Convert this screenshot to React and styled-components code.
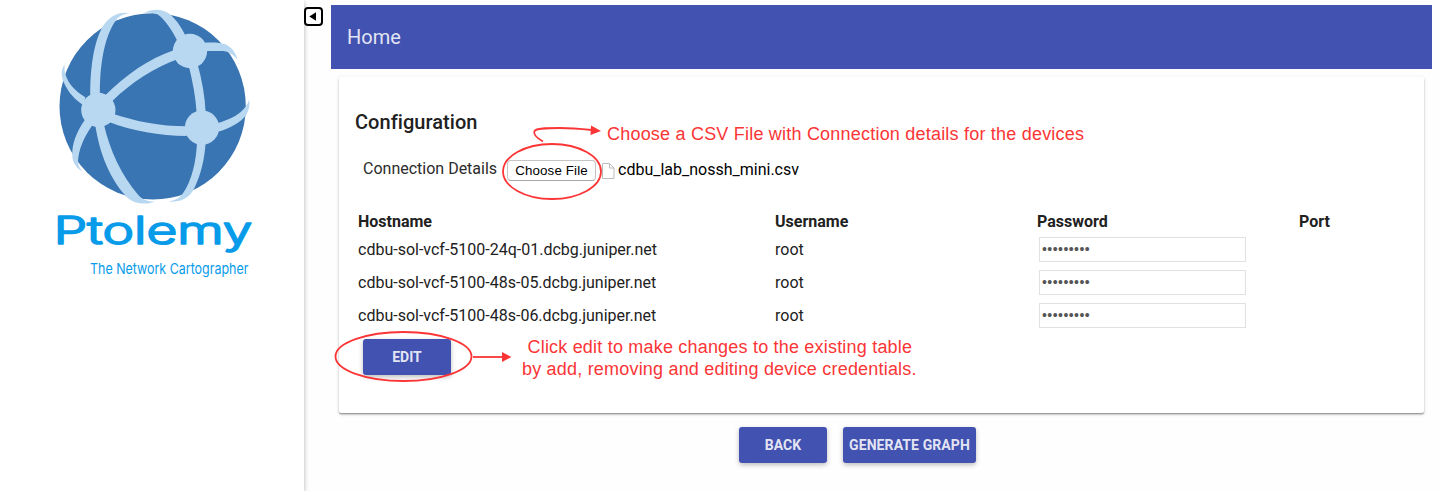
import React from "react";
import styled, { createGlobalStyle } from "styled-components";

const GlobalStyle = createGlobalStyle`
  *, *::before, *::after { box-sizing: border-box; }
  body {
    margin: 0;
    background: #fefefe;
    color: #212121;
    font-family: Roboto, "Liberation Sans", sans-serif;
    overflow: hidden;
  }
`;

const Page = styled.div`
  position: relative;
  display: flex;
  width: 1440px;
  height: 491px;
`;

const Sidebar = styled.aside`
  flex: none;
  width: 304px;
  padding-left: 40px;
  background: #fff;
  box-shadow: 0 2px 5px rgba(0, 0, 0, 0.3);
`;

const LogoDrawing = styled.svg`
  display: block;
  overflow: visible;
`;

const ToggleColumn = styled.div`
  flex: none;
  width: 27px;
  padding-top: 7px;
`;

const CollapseButton = styled.button`
  display: flex;
  align-items: center;
  justify-content: center;
  width: 19px;
  height: 19px;
  padding: 0;
  border: 2px solid #000;
  border-radius: 4px;
  background: #fff;
`;

const Main = styled.main`
  width: 1101px;
  padding-top: 5px;
`;

const Header = styled.header`
  display: flex;
  align-items: center;
  height: 64px;
  padding-left: 16px;
  background: #4252b1;
  color: rgba(255, 255, 255, 0.87);
  font-size: 20px;
`;

const Card = styled.section`
  height: 336px;
  margin: 8px 8px 0;
  padding: 33px 16px 0;
  border-radius: 2px;
  background: #fff;
  box-shadow: 0 2px 2px 0 rgba(0, 0, 0, 0.14), 0 1px 1px 0 rgba(0, 0, 0, 0.26),
    0 1px 4px 0 rgba(0, 0, 0, 0.12);
`;

const Title = styled.h2`
  margin: 0;
  font-size: 20px;
  font-weight: 500;
  line-height: 24px;
  letter-spacing: 0.05px;
`;

const FileRow = styled.div`
  display: flex;
  align-items: center;
  height: 22px;
  margin-top: 26px;
  padding-left: 8px;
  color: #000;
`;

const FieldLabel = styled.label`
  width: 144px;
  margin-top: -5px;
  color: #2b2b2b;
  font-size: 16px;
  white-space: nowrap;
`;

const FileButton = styled.button`
  width: 89px;
  height: 21px;
  margin: -1px 6px 0 0;
  padding: 0 0 1px;
  border: 1px solid #c4c4c4;
  border-bottom-color: #a6a6a6;
  border-radius: 4px;
  background: #fff;
  color: #000;
  font: 13.33px "Liberation Sans", Arial, sans-serif;
  letter-spacing: 0.14px;
  white-space: nowrap;
`;

const FileName = styled.span`
  margin: -3px 0 0 3px;
  font-size: 16px;
`;

const DeviceGrid = styled.div`
  display: grid;
  grid-template-columns: 417px 262px 262px 1fr;
  grid-template-rows: 22px repeat(3, 33px);
  align-items: center;
  margin-top: 29px;
  padding-left: 3px;
  font-size: 16px;
`;

const HeadCell = styled.div`
  padding-bottom: 2px;
  font-weight: 700;
`;

const Cell = styled.div`
  white-space: nowrap;
`;

const PasswordInput = styled.input`
  display: block;
  width: 207px;
  height: 25px;
  margin-left: 2px;
  padding: 0 2px 2px;
  border: 1px solid #e1e1e1;
  background: #fff;
  color: #555;
  font: 14px "Liberation Sans", Arial, sans-serif;
  letter-spacing: 0.45px;
`;

const RaisedButton = styled.button`
  display: inline-flex;
  align-items: center;
  justify-content: center;
  width: ${(p) => p.$width || 88}px;
  height: 36px;
  padding: 0;
  border: 0;
  border-radius: 3px;
  background: #4252b1;
  color: rgba(255, 255, 255, 0.87);
  font: 700 14px Roboto, sans-serif;
  letter-spacing: ${(p) => p.$tracking || 0}px;
  text-transform: uppercase;
  white-space: nowrap;
  box-shadow: 0 2px 5px 0 rgba(0, 0, 0, 0.26);
`;

const CardActions = styled.div`
  padding: 7px 0 0 8px;
`;

const PageActions = styled.div`
  display: flex;
  justify-content: center;
  gap: 16px;
  margin-top: 14px;
  padding-right: 48px;
`;

const Markup = styled.svg`
  position: absolute;
  top: 0;
  left: 0;
  pointer-events: none;
`;

const devices = [
  { host: "cdbu-sol-vcf-5100-24q-01.dcbg.juniper.net", user: "root" },
  { host: "cdbu-sol-vcf-5100-48s-05.dcbg.juniper.net", user: "root" },
  { host: "cdbu-sol-vcf-5100-48s-06.dcbg.juniper.net", user: "root" },
];

function Logo() {
  return (
    <LogoDrawing width="230" height="290" viewBox="0 0 690 870">
      <circle cx="338" cy="319" r="279.500" fill="#3975b2" />
      <g fill="#b8d7f1">
        <path d="M151 292 C150 210 160 128 189 78 C210 46 240 33 270 40 C250 42 238 48 229 59 C195 105 178 190 180 292Z" />
        <path d="M312 39 C340 23 372 28 390 43 C407 58 423 79 437 108 L412 122 C394 88 374 57 352 43 C340 38 328 37 312 39Z" />
        <path d="M490 128 C515 127 540 126 556 133 C575 142 588 158 592 179 C578 160 562 153 544 153 L492 153Z" />
        <path d="M196 286 C256 225 326 176 405 149 L412 178 C342 204 276 245 214 306Z" />
        <path d="M472 190 C486 240 495 290 497 340 L470 340 C467 292 458 245 446 196Z" />
        <path d="M212 339 C285 364 360 379 440 379 L440 408 C358 407 278 393 207 366Z" />
        <path d="M530 370 C563 361 592 347 609 329 C619 318 624 310 627 299 C634 330 615 358 584 374 C568 383 550 391 530 396Z" />
        <path d="M497 425 C494 475 484 520 463 565 C448 594 423 609 384 604 C409 602 420 593 429 580 C456 541 469 482 471 425Z" />
        <path d="M191 370 C209 452 246 528 293 583 C305 598 320 605 345 605 C314 615 285 612 263 594 C212 542 178 462 165 370Z" />
        <path d="M157 376 C132 411 115 450 114 485 C115 497 119 504 127 514 C105 503 94 480 97 454 C99 421 116 383 139 354Z" />
        <path d="M136 292 C108 275 84 251 76 222 C73 211 73 205 74 193 C62 210 62 231 74 253 C86 278 105 300 130 315Z" />
        <circle cx="450" cy="153" r="51.500" />
        <circle cx="175" cy="330" r="51.500" />
        <circle cx="486" cy="383" r="51.500" />
      </g>
      <g fill="#079be9" fontFamily="Inter, sans-serif">
        <text
          x="41" y="731" fontSize="113" fontWeight="300" textLength="596"
          lengthAdjust="spacingAndGlyphs" stroke="#079be9" strokeWidth="5"
          strokeLinejoin="round"
        >
          Ptolemy
        </text>
        <text
          x="150" y="822" fontSize="45" textLength="475"
          lengthAdjust="spacingAndGlyphs"
        >
          The Network Cartographer
        </text>
      </g>
    </LogoDrawing>
  );
}

function FileIcon() {
  return (
    <svg width="13" height="17" viewBox="0 0 13 17">
      <path d="M.5 .5H7.500L12 5V15.500H.5Z" fill="#fff" stroke="#bcbcbc" />
      <path d="M7.500 .5V5H12" fill="none" stroke="#bcbcbc" />
    </svg>
  );
}

function Annotations() {
  return (
    <Markup width="1440" height="491" viewBox="0 0 1440 491">
      <g fill="none" stroke="#fb3536" strokeWidth="1.8">
        <ellipse cx="552" cy="171.500" rx="49" ry="27.500" />
        <path d="M543 141.500C537 138 533 134 534.500 131C536 128 546 128 560 128C572 128 582 129 592 130" />
        <ellipse cx="403.500" cy="356.500" rx="68" ry="24.500" />
        <path d="M473 357H503" />
      </g>
      <g fill="#fb3536">
        <path d="M591 125.500 601 131 590.500 135Z" />
        <path d="M502 352 511.500 357 502 362Z" />
      </g>
      <g fill="#fb3536" fontFamily='"Liberation Sans", Arial, sans-serif' fontSize="18">
        <text x="607" y="140" textLength="477">
          Choose a CSV File with Connection details for the devices
        </text>
        <text x="527.500" y="353" textLength="384.500">
          Click edit to make changes to the existing table
        </text>
        <text x="522" y="375" textLength="394.500">
          by add, removing and editing device credentials.
        </text>
      </g>
    </Markup>
  );
}

export default function App() {
  return (
    <>
      <GlobalStyle />
      <Page>
        <Sidebar>
          <Logo />
        </Sidebar>
        <ToggleColumn>
          <CollapseButton aria-label="Collapse sidebar">
            <svg width="15" height="15" viewBox="0 0 15 15">
              <path d="M3.300 7.500 10 3.300V11.700Z" />
            </svg>
          </CollapseButton>
        </ToggleColumn>
        <Main>
          <Header>Home</Header>
          <Card>
            <Title>Configuration</Title>
            <FileRow>
              <FieldLabel>Connection Details</FieldLabel>
              <FileButton>Choose File</FileButton>
              <FileIcon />
              <FileName>cdbu_lab_nossh_mini.csv</FileName>
            </FileRow>
            <DeviceGrid>
              <HeadCell>Hostname</HeadCell>
              <HeadCell>Username</HeadCell>
              <HeadCell>Password</HeadCell>
              <HeadCell>Port</HeadCell>
              {devices.map((d) => (
                <React.Fragment key={d.host}>
                  <Cell>{d.host}</Cell>
                  <Cell>{d.user}</Cell>
                  <PasswordInput type="password" defaultValue="ninechars" />
                  <Cell />
                </React.Fragment>
              ))}
            </DeviceGrid>
            <CardActions>
              <RaisedButton>Edit</RaisedButton>
            </CardActions>
          </Card>
          <PageActions>
            <RaisedButton>Back</RaisedButton>
            <RaisedButton $width={133} $tracking={0.1}>Generate Graph</RaisedButton>
          </PageActions>
        </Main>
        <Annotations />
      </Page>
    </>
  );
}
